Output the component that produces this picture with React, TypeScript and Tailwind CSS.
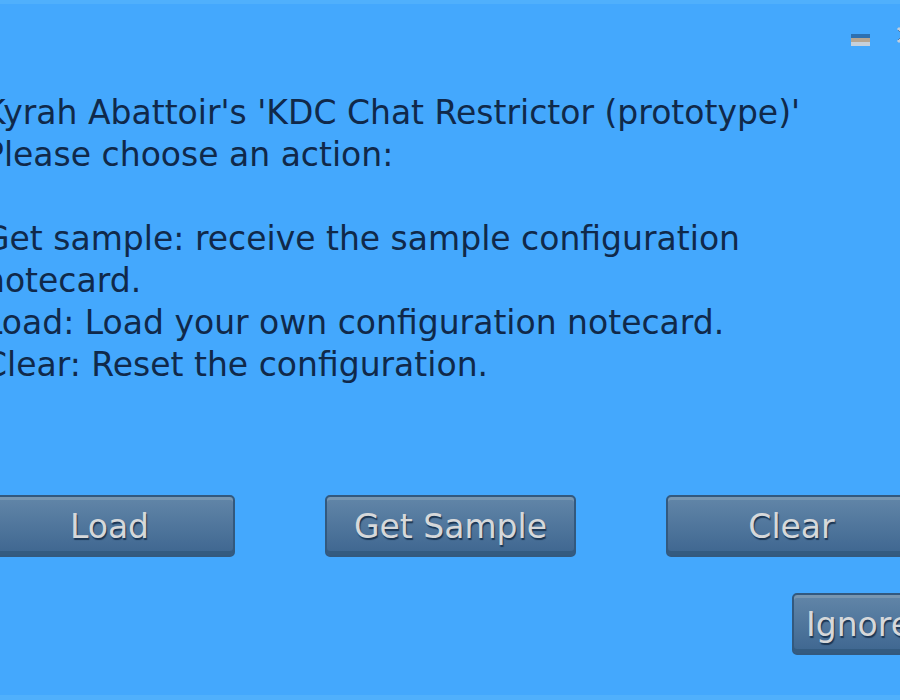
import React from 'react';

const lines = [
  "Kyrah Abattoir's 'KDC Chat Restrictor (prototype)'",
  'Please choose an action:',
  '',
  'Get sample: receive the sample configuration',
  'notecard.',
  'Load: Load your own configuration notecard.',
  'Clear: Reset the configuration.',
];

function DialogButton({ label, className = '' }: { label: string; className?: string }) {
  return (
    <button
      className={`h-[62px] rounded-[5px] border-2 border-[#33597e] bg-gradient-to-b from-[#6286a8] to-[#3e6690] shadow-[inset_0_3px_0_#7896b0,inset_0_-4px_0_#345b80] text-[33px] leading-none text-[#d6d8da] [text-shadow:1px_2px_1px_#1b3654] ${className}`}
      style={{ fontFamily: '"DejaVu Sans", Verdana, sans-serif' }}
    >
      {label}
    </button>
  );
}

export default function App() {
  return (
    <div
      className="h-[700px] w-[900px] overflow-hidden border-t-4 border-b-[5px] border-[#50b0fc] bg-[#44a8fd]"
      style={{ fontFamily: '"DejaVu Sans", Verdana, sans-serif' }}
    >
      {/* title bar controls */}
      <div className="flex h-[88px] items-start justify-end gap-[26px] pt-[30px] -mr-[14px]">
        <div className="flex w-[19px] flex-col">
          <div className="h-[4px] bg-[#2d70b0]" />
          <div className="h-[4px] bg-[#b6a692]" />
          <div className="h-[4px] bg-[#c6d0da]" />
        </div>
        <svg width="18" height="18" viewBox="0 0 18 18" className="-mt-[8px]">
          <path d="M2 2 L16 16 M16 2 L2 16" stroke="#c2cedb" strokeWidth="3" />
          <path d="M2 4 L14 16 M14 2 L2 14" stroke="#4f7da8" strokeWidth="1" />
        </svg>
      </div>

      <div className="-ml-[16px] w-[934px]">
        <div className="text-[33px] leading-[42px] text-[#10294a]">
          {lines.map((line, i) => (
            <div key={i} className="h-[42px] whitespace-pre">
              {line}
            </div>
          ))}
        </div>

        <div className="mt-[109px] grid grid-cols-[251px_251px_251px] gap-[90px]">
          <DialogButton label="Load" />
          <DialogButton label="Get Sample" />
          <DialogButton label="Clear" />
        </div>

        <div className="mt-[36px] flex justify-end">
          <DialogButton label="Ignore" className="w-[126px] whitespace-nowrap pl-[12px] text-left" />
        </div>
      </div>
    </div>
  );
}
